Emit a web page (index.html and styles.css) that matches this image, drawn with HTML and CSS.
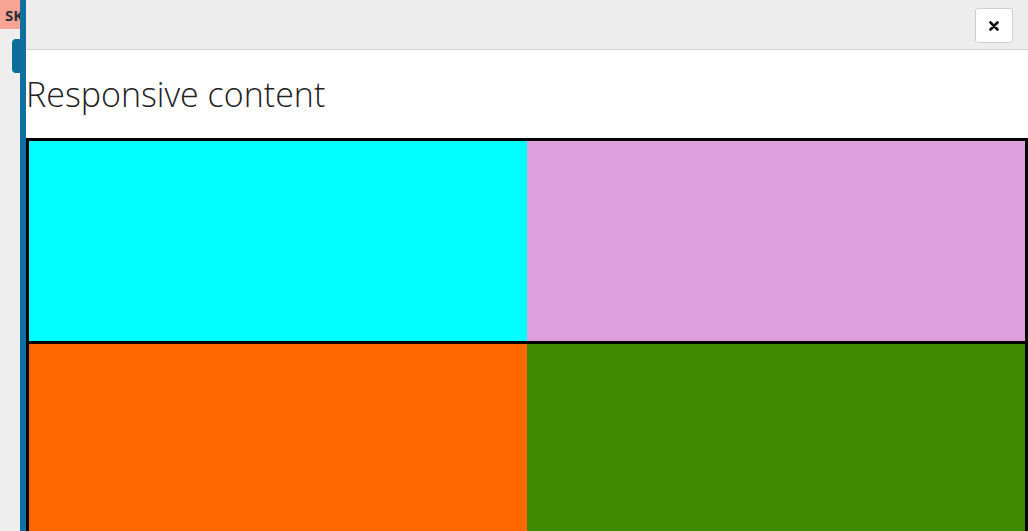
FILE: index.html
```html
<!DOCTYPE html>
<html>
<head>
<meta charset="utf-8">
<link rel="stylesheet" href="styles.css">
</head>
<body>
<div class="page">
  <aside class="side">
    <div class="badge">SK</div>
    <div class="tab"></div>
  </aside>
  <div class="modal">
    <div class="modal-header">
      <button class="close" aria-label="Close">
        <svg width="10" height="10" viewBox="0 0 10 10"><path d="M1.5 1.5 L8.5 8.5 M8.5 1.5 L1.5 8.5" stroke="#111" stroke-width="2.6" stroke-linecap="round"/></svg>
      </button>
    </div>
    <div class="modal-body">
      <h1 class="title">Responsive content</h1>
      <div class="grid">
        <div class="row row-top">
          <div class="cell cyan"></div>
          <div class="cell plum"></div>
        </div>
        <div class="row">
          <div class="cell orange"></div>
          <div class="cell green"></div>
        </div>
      </div>
    </div>
  </div>
</div>
</body>
</html>
```
FILE: styles.css
```css
html, body {
  margin: 0;
  padding: 0;
  height: 100%;
  overflow: hidden;
  background: #eeeeee;
  font-family: "Noto Sans", "Liberation Sans", sans-serif;
}
.page {
  display: flex;
  height: 531px;
}
.side {
  width: 20px;
  flex: none;
  position: relative;
  background: #eeeeee;
}
.badge {
  width: 40px;
  height: 29px;
  background: #f8a393;
  color: #2a2f3a;
  font-weight: 700;
  font-size: 15px;
  line-height: 31px;
  padding-left: 5px;
  box-sizing: border-box;
}
.tab {
  margin-top: 10px;
  margin-left: 12px;
  width: 12px;
  height: 34px;
  background: #0f6d9c;
  border-radius: 4px 0 0 4px;
}
.modal {
  flex: 1;
  position: relative;
  z-index: 1;
  border-left: 6px solid #0f6f9f;
  background: #ffffff;
  display: flex;
  flex-direction: column;
  overflow: hidden;
}
.modal-header {
  flex: none;
  height: 41px;
  background: #ededed;
  border-bottom: 1px solid #d4d4d4;
  display: flex;
  justify-content: flex-end;
  align-items: flex-start;
  padding: 8px 15px 0 0;
}
.close {
  width: 38px;
  height: 35px;
  background: #fff;
  border: 1px solid #cfcfcf;
  border-radius: 3px;
  padding: 0;
  display: flex;
  align-items: center;
  justify-content: center;
}
.modal-body {
  flex: none;
}
.title {
  margin: 24px 0 24px 0;
  font-family: "Open Sans", sans-serif;
  font-weight: 300;
  font-size: 34px;
  line-height: 40px;
  color: #222;
}
.grid {
  border: 3px solid #000;
}
.row {
  display: flex;
  height: 200px;
}
.row-top {
  border-bottom: 3px solid #000;
}
.cell {
  flex: 1;
}
.cyan { background: #00ffff; }
.plum { background: #dda0dd; }
.orange { background: #ff6600; }
.green { background: #408a00; }
```
